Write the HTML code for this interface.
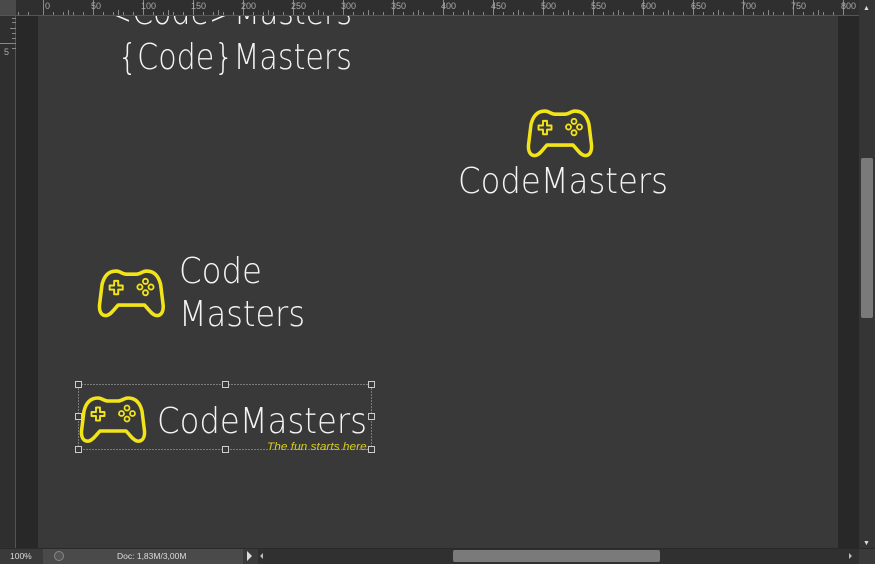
<!DOCTYPE html>
<html><head><meta charset="utf-8"><style>
html,body{margin:0;padding:0;width:875px;height:564px;overflow:hidden;background:#393939;font-family:"Liberation Sans",sans-serif}
.t{font-family:"DejaVu Sans ExtraLight","DejaVu Sans Light","Liberation Sans",sans-serif;font-weight:200}
</style></head><body>
<svg width="875" height="564" xmlns="http://www.w3.org/2000/svg" style="display:block">
<defs>
<g id="pad" fill="none" stroke="#f2e418" stroke-width="3.5" stroke-linejoin="round" stroke-linecap="round">
<path d="M18 3 C10 3 6 8 4 16 L1.5 36 C1 43 4 47 9 46 C13 45 16 40 20 36 L46 36 C50 40 53 45 57 46 C62 47 65 43 64.5 36 L62 16 C60 8 56 3 48 3 C44 3 42 6 38 6 L28 6 C24 6 22 3 18 3 Z"/>
<path d="M16 12.5 h4 v4.5 h4.5 v4 h-4.5 v4.5 h-4 v-4.5 h-4.5 v-4 h4.5 z" stroke-width="1.9"/>
<circle cx="47" cy="13" r="2.5" stroke-width="1.8"/><circle cx="41.5" cy="18.5" r="2.5" stroke-width="1.8"/><circle cx="52.5" cy="18.5" r="2.5" stroke-width="1.8"/><circle cx="47" cy="24" r="2.5" stroke-width="1.8"/>
</g>
</defs>
<rect width="875" height="564" fill="#393939"/>
<rect x="16" y="15" width="22" height="533" fill="#282828"/>
<rect x="838" y="15" width="21" height="533" fill="#282828"/>
<rect x="859" y="0" width="16" height="548" fill="#353535"/>
<rect x="861" y="158" width="12" height="160" rx="2" fill="#7a7a7a"/>
<text x="863" y="10" font-size="7" fill="#ddd">▲</text>
<text x="863" y="545" font-size="7" fill="#ddd">▼</text>
<text class="t" font-size="36" fill="#f4f4f4">
<tspan x="107" y="24" textLength="245" lengthAdjust="spacingAndGlyphs">&lt;Code&gt;Masters</tspan>
<tspan x="118" y="69" textLength="234" lengthAdjust="spacingAndGlyphs">{Code}Masters</tspan>
<tspan x="458" y="193" textLength="210" lengthAdjust="spacingAndGlyphs">CodeMasters</tspan>
<tspan x="179" y="283" textLength="83" lengthAdjust="spacingAndGlyphs">Code</tspan>
<tspan x="179" y="326" textLength="126" lengthAdjust="spacingAndGlyphs">Masters</tspan>
<tspan x="157" y="433" textLength="210" lengthAdjust="spacingAndGlyphs">CodeMasters</tspan>
</text>
<text x="267" y="450" font-size="11" font-style="italic" fill="#d8cc20" textLength="103" lengthAdjust="spacingAndGlyphs">The fun starts here.</text>
<use href="#pad" transform="translate(527,108) scale(1,1.03)"/>
<use href="#pad" transform="translate(98,268) scale(1.01,1.03)"/>
<use href="#pad" transform="translate(80,395) scale(1.0,1.0)"/>
<rect x="78.5" y="384.5" width="293" height="65" fill="none" stroke="#bbb" stroke-dasharray="1,2"/>
<g fill="#393939" stroke="#ccc" stroke-width="1">
<rect x="75.5" y="381.5" width="6" height="6"/><rect x="222.5" y="381.5" width="6" height="6"/><rect x="368.5" y="381.5" width="6" height="6"/>
<rect x="75.5" y="413.5" width="6" height="6"/><rect x="368.5" y="413.5" width="6" height="6"/>
<rect x="75.5" y="446.5" width="6" height="6"/><rect x="222.5" y="446.5" width="6" height="6"/><rect x="368.5" y="446.5" width="6" height="6"/>
</g>
<rect x="0" y="0" width="859" height="15" fill="#2f2f2f"/>
<rect x="0" y="0" width="16" height="548" fill="#2f2f2f"/>
<rect x="0" y="0" width="16" height="15" fill="#4a4a4a"/>
<line x1="0" y1="15.5" x2="859" y2="15.5" stroke="#555"/>
<line x1="15.5" y1="15" x2="15.5" y2="548" stroke="#555"/>
<g stroke="#888" stroke-width="1">
<path d="M43.5 0v15M93.5 0v15M143.5 0v15M193.5 0v15M243.5 0v15M293.5 0v15M343.5 0v15M393.5 0v15M443.5 0v15M493.5 0v15M543.5 0v15M593.5 0v15M643.5 0v15M693.5 0v15M743.5 0v15M793.5 0v15M843.5 0v15"/>
<path d="M18.5 12v3M28.5 12v3M53.5 12v3M63.5 12v3M68.5 10v5M73.5 12v3M83.5 12v3M103.5 12v3M113.5 12v3M118.5 10v5M123.5 12v3M133.5 12v3M153.5 12v3M163.5 12v3M168.5 10v5M173.5 12v3M183.5 12v3M203.5 12v3M213.5 12v3M218.5 10v5M223.5 12v3M233.5 12v3M253.5 12v3M263.5 12v3M268.5 10v5M273.5 12v3M283.5 12v3M303.5 12v3M313.5 12v3M318.5 10v5M323.5 12v3M333.5 12v3M353.5 12v3M363.5 12v3M368.5 10v5M373.5 12v3M383.5 12v3M403.5 12v3M413.5 12v3M418.5 10v5M423.5 12v3M433.5 12v3M453.5 12v3M463.5 12v3M468.5 10v5M473.5 12v3M483.5 12v3M503.5 12v3M513.5 12v3M518.5 10v5M523.5 12v3M533.5 12v3M553.5 12v3M563.5 12v3M568.5 10v5M573.5 12v3M583.5 12v3M603.5 12v3M613.5 12v3M618.5 10v5M623.5 12v3M633.5 12v3M653.5 12v3M663.5 12v3M668.5 10v5M673.5 12v3M683.5 12v3M703.5 12v3M713.5 12v3M718.5 10v5M723.5 12v3M733.5 12v3M753.5 12v3M763.5 12v3M768.5 10v5M773.5 12v3M783.5 12v3M803.5 12v3M813.5 12v3M818.5 10v5M823.5 12v3M833.5 12v3"/>
<path d="M12 18.5h4M12 22.5h4M10 28.5h6M12 33.5h4M12 38.5h4M0 43.5h16M12 48.5h4"/>
</g>
<g font-size="9" fill="#aaa">
<text x="45" y="9">0</text><text x="91" y="9">50</text><text x="141" y="9">100</text><text x="191" y="9">150</text><text x="241" y="9">200</text><text x="291" y="9">250</text><text x="341" y="9">300</text><text x="391" y="9">350</text><text x="441" y="9">400</text><text x="491" y="9">450</text><text x="541" y="9">500</text><text x="591" y="9">550</text><text x="641" y="9">600</text><text x="691" y="9">650</text><text x="741" y="9">700</text><text x="791" y="9">750</text><text x="841" y="9">800</text>
<text x="4" y="55">5</text>
</g>
<rect x="0" y="548" width="875" height="16" fill="#3a3a3a"/>
<line x1="0" y1="548.5" x2="875" y2="548.5" stroke="#2a2a2a"/>
<rect x="43" y="549" width="200" height="15" fill="#4a4a4a"/>
<text x="10" y="559" font-size="8.5" fill="#ddd">100%</text>
<circle cx="59" cy="556" r="4.5" fill="#555" stroke="#888"/>
<text x="117" y="559" font-size="8.5" fill="#ddd">Doc: 1,83M/3,00M</text>
<path d="M247 551 l5 5 l-5 5z" fill="#ddd"/>
<rect x="258" y="549" width="601" height="15" fill="#303030"/>
<path d="M263 553 l-3 3 l3 3z" fill="#bbb"/><path d="M849 553 l3 3 l-3 3z" fill="#bbb"/>
<rect x="453" y="550" width="207" height="12" rx="2" fill="#7a7a7a"/>
</svg>
</body></html>
